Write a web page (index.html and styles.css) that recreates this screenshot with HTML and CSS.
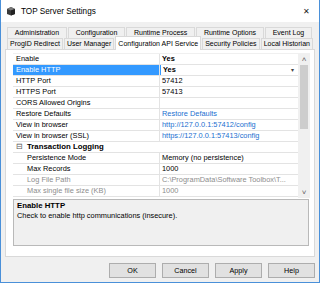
FILE: index.html
```html
<!DOCTYPE html>
<html lang="en">
<head>
    <meta charset="UTF-8">
    <title>TOP Server Settings</title>
    <link rel="stylesheet" href="styles.css">
</head>
<body>
<div class="window">
    <div class="titlebar">
        <svg class="app-icon" width="10" height="10" viewBox="0 0 10 10">
            <path d="M1 3 L5 1 L9 3 L9 8 L5 9.5 L1 8 Z" fill="#3a3a3a"/>
            <path d="M1 3 L5 1 L9 3 L5 4.6 Z" fill="#7a7a7a"/>
            <path d="M5 4.6 L9 3 L9 8 L5 9.5 Z" fill="#222"/>
        </svg>
        <span class="title">TOP Server Settings</span>
        <span class="close">&#x2715;</span>
    </div>

    <div class="client">
        <div class="tabs">
            <div class="tab-row">
                <div class="tab">Administration</div>
                <div class="tab">Configuration</div>
                <div class="tab">Runtime Process</div>
                <div class="tab">Runtime Options</div>
                <div class="tab">Event Log</div>
            </div>
            <div class="tab-row">
                <div class="tab">ProgID Redirect</div>
                <div class="tab">User Manager</div>
                <div class="tab active">Configuration API Service</div>
                <div class="tab">Security Policies</div>
                <div class="tab">Local Historian</div>
            </div>
        </div>

        <div class="page">
            <div class="grid">
                <div class="props">
                    <div class="row"><div class="name">Enable</div><div class="value bold">Yes</div></div>
                    <div class="row selected"><div class="name">Enable HTTP</div><div class="value bold editing">Yes<span class="drop">&#9662;</span></div></div>
                    <div class="row"><div class="name">HTTP Port</div><div class="value">57412</div></div>
                    <div class="row"><div class="name">HTTPS Port</div><div class="value">57413</div></div>
                    <div class="row"><div class="name">CORS Allowed Origins</div><div class="value"></div></div>
                    <div class="row"><div class="name">Restore Defaults</div><div class="value link">Restore Defaults</div></div>
                    <div class="row"><div class="name">View in browser</div><div class="value link">http://127.0.0.1:57412/config</div></div>
                    <div class="row"><div class="name">View in browser (SSL)</div><div class="value link">https://127.0.0.1:57413/config</div></div>
                    <div class="row category"><span class="toggle">&#8863;</span>Transaction Logging</div>
                    <div class="row"><div class="name child">Persistence Mode</div><div class="value">Memory (no persistence)</div></div>
                    <div class="row"><div class="name child">Max Records</div><div class="value">1000</div></div>
                    <div class="row disabled"><div class="name child">Log File Path</div><div class="value">C:\ProgramData\Software Toolbox\T...</div></div>
                    <div class="row disabled"><div class="name child">Max single file size (KB)</div><div class="value">1000</div></div>
                </div>
                <div class="scrollbar">
                    <span class="arrow">&#x2C4;</span>
                    <div class="track"><div class="thumb"></div></div>
                    <span class="arrow">&#x2C5;</span>
                </div>
            </div>
            <div class="description">
                <div class="desc-title">Enable HTTP</div>
                <div class="desc-text">Check to enable http communications (insecure).</div>
            </div>
        </div>

        <div class="buttons">
            <button>OK</button>
            <button>Cancel</button>
            <button>Apply</button>
            <button>Help</button>
        </div>
    </div>
</div>
</body>
</html>
```

FILE: styles.css
```css
body {
    margin: 0;
    font-family: "Liberation Sans", Arial, sans-serif;
    color: #000;
}
.window {
    width: 320px;
    height: 283px;
    box-sizing: border-box;
    border: 1px solid #4a90d9;
    border-top: none;
    background: #f0f0f0;
    display: flex;
    flex-direction: column;
}
.titlebar {
    height: 22px;
    background: #fff;
    display: flex;
    align-items: center;
    padding-left: 5px;
    font-size: 8.2px;
}
.app-icon {
    margin-right: 5px;
}
.title {
    flex: 1;
}
.close {
    font-size: 8px;
    margin-right: 9px;
    color: #222;
}
.client {
    flex: 1;
    padding: 5px 4px 0 4px;
    display: flex;
    flex-direction: column;
}
.tabs {
    padding: 0 2px 0 2px;
    font-size: 7px;
}
.tab-row {
    display: flex;
    height: 11px;
}
.tab {
    flex: 1 1 auto;
    box-sizing: border-box;
    text-align: center;
    border: 1px solid #d9d9d9;
    border-bottom: none;
    margin-right: 1px;
    line-height: 10px;
    padding: 0 2px;
    white-space: nowrap;
}
.tab-row + .tab-row {
    margin-right: -1px;
}
.tab.active {
    background: #fff;
    border-color: #d9d9d9;
    height: 14px;
    margin-top: -2px;
    position: relative;
    z-index: 1;
    line-height: 13px;
}
.page {
    height: 208px;
    box-sizing: border-box;
    background: #fff;
    border: 1px solid #d9d9d9;
    padding: 3px 4px 0 7px;
}
.grid {
    display: flex;
    height: 144px;
    border-top: 1px solid #f0f0f0;
}
.props {
    flex: 1;
    overflow: hidden;
    font-size: 7.4px;
}
.row {
    display: flex;
    height: 11px;
    box-sizing: border-box;
    border-bottom: 1px solid #e3e3e3;
    line-height: 10px;
    white-space: nowrap;
}
.name {
    width: 147px;
    box-sizing: border-box;
    padding-left: 3px;
    border-right: 1px solid #e3e3e3;
    overflow: hidden;
}
.name.child {
    padding-left: 14px;
}
.value {
    flex: 1;
    padding-left: 2px;
    overflow: hidden;
    position: relative;
}
.bold {
    font-weight: bold;
}
.link {
    color: #1a6fd0;
}
.selected .name {
    background: #3399ff;
    color: #fff;
}
.editing {
    border-left: 1px solid #3399ff;
}
.drop {
    position: absolute;
    right: 4px;
    top: 0;
    font-size: 6px;
    font-weight: normal;
    color: #444;
}
.category {
    font-weight: bold;
    font-size: 7.8px;
}
.toggle {
    width: 14px;
    padding-left: 3px;
    box-sizing: border-box;
    font-weight: normal;
    color: #555;
    font-size: 8px;
}
.disabled {
    color: #8d8d8d;
}
.scrollbar {
    width: 12px;
    background: #f0f0f0;
    display: flex;
    flex-direction: column;
    align-items: center;
}
.arrow {
    height: 11px;
    font-size: 8px;
    line-height: 11px;
    color: #606060;
}
.track {
    flex: 1;
    width: 100%;
}
.thumb {
    margin: 0 2px;
    height: 64px;
    background: #cdcdcd;
}
.description {
    margin-top: 1px;
    height: 47px;
    box-sizing: border-box;
    margin-right: 1px;
    background: #f0f0f0;
    border: 1px solid #b9b9b9;
    padding: 1px 3px;
    font-size: 7.4px;
}
.desc-title {
    font-weight: bold;
    font-size: 7.8px;
    line-height: 10px;
}
.desc-text {
    line-height: 10px;
}
.buttons {
    display: flex;
    justify-content: flex-end;
    gap: 6px;
    margin-top: 6px;
}
button {
    width: 47px;
    height: 15px;
    padding: 0;
    border: 1px solid #adadad;
    background: #e1e1e1;
    font-family: "Liberation Sans", Arial, sans-serif;
    font-size: 7.2px;
    color: #000;
}
```
